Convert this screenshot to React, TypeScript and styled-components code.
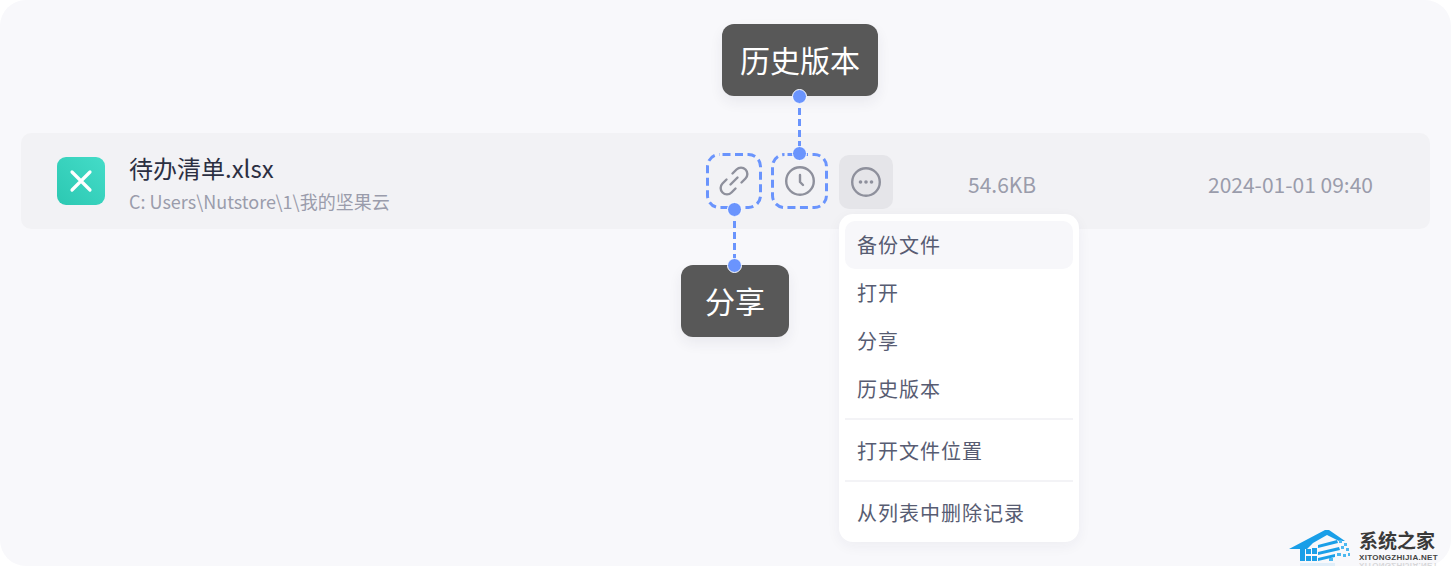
import React from "react"
import styled, { createGlobalStyle } from "styled-components"

const menuGroups = [
  ["备份文件", "打开", "分享", "历史版本"],
  ["打开文件位置"],
  ["从列表中删除记录"],
]

const DashFrame = ({ width }: { width: number }) => (
  <DashSvg width={width} height={56} viewBox={`0 0 ${width} 56`} fill="none">
    <rect x="1.5" y="1.5" width={width - 3} height="53" rx="12" stroke="#6a94fd" strokeWidth="3" strokeDasharray="8 4.5" strokeDashoffset="-3" />
  </DashSvg>
)

const App = () => {
  return (
    <>
      <GlobalStyle />
      <Panel>
        <FileRow>
          <FileIcon>
            <svg width="26" height="26" viewBox="0 0 26 26">
              <path d="M4 4 L22 22 M22 4 L4 22" stroke="#fff" strokeWidth="3.2" strokeLinecap="round" />
            </svg>
          </FileIcon>
          <FileText>
            <FileName>待办清单.xlsx</FileName>
            <FilePath>C: Users\Nutstore\1\我的坚果云</FilePath>
          </FileText>
          <Actions>
            <DashedAction>
              <DashFrame width={56} />
              <svg width="32" height="32" viewBox="0 0 32 32" fill="none" stroke="#8e909c" strokeWidth="2.4" strokeLinecap="round">
                <path d="M14.5 8.5 L18.5 4.5 A6.36 6.36 0 0 1 27.5 13.5 L23.5 17.5" />
                <path d="M8.5 14.5 L4.5 18.5 A6.36 6.36 0 0 0 13.5 27.5 L17.5 23.5" />
                <path d="M12.5 19.5 L19.5 12.5" />
              </svg>
            </DashedAction>
            <DashedAction $wide>
              <DashFrame width={57} />
              <svg width="32" height="32" viewBox="0 0 32 32" fill="none" stroke="#8e909c" strokeWidth="2.4" strokeLinecap="round" strokeLinejoin="round">
                <circle cx="16" cy="16" r="13.8" />
                <path d="M16 10 V17 L19 20" />
              </svg>
            </DashedAction>
            <MoreButton>
              <svg width="32" height="32" viewBox="0 0 32 32" fill="none">
                <circle cx="16" cy="16" r="13.8" stroke="#8e909c" strokeWidth="2.4" />
                <circle cx="10.5" cy="16" r="1.8" fill="#8e909c" />
                <circle cx="16" cy="16" r="1.8" fill="#8e909c" />
                <circle cx="21.5" cy="16" r="1.8" fill="#8e909c" />
              </svg>
            </MoreButton>
          </Actions>
          <SizeText>54.6KB</SizeText>
          <TimeText>2024-01-01 09:40</TimeText>
        </FileRow>

        <Menu>
          {menuGroups.map((group, i) => (
            <MenuGroup key={i}>
              {group.map((label, j) => (
                <MenuItem key={label} $active={i === 0 && j === 0}>
                  {label}
                </MenuItem>
              ))}
            </MenuGroup>
          ))}
        </Menu>

        <HistoryCallout>
          <CalloutBox>历史版本</CalloutBox>
          <Dot $overlap="above" />
          <Connector />
          <Dot />
        </HistoryCallout>

        <ShareCallout>
          <Dot />
          <Connector />
          <Dot $overlap="below" />
          <CalloutBox>分享</CalloutBox>
        </ShareCallout>

        <Watermark>
          <svg width="63" height="42" viewBox="0 0 63 42">
            <path d="M0 21 L36 2 L40 2 L56 13 L50 13 L38 7 L24 15 L18 21 Z" fill="#1a9fe8" />
            <path d="M11 21 H16 V33 H11 Z" fill="#1a9fe8" />
            <path d="M17 21 H22 V26 H17 Z M23 20 H28 V26 H23 Z M17 28 H22 V33 H17 Z M23 28 H28 V33 H23 Z" fill="#1a9fe8" />
            <path d="M29 17 L48 12 L49 15 L29 20 Z M29 24 L50 19 L51 22 L29 27 Z M29 30 L46 26 L46 29 L29 33 Z" fill="#1a9fe8" />
            <path d="M50 12 h3 v3 h-3 Z M55 15 h3 v3 h-3 Z M52 18 h3 v3 h-3 Z M57 20 h3 v3 h-3 Z M48 25 h4 v3 h-4 Z M54 26 h3 v3 h-3 Z M59 25 h2 v3 h-2 Z M40 30 h4 v3 h-4 Z" fill="#4cb8f0" />
            <path d="M11 35 H46 V41 H11 Z" fill="#1a9fe8" opacity=".1" />
          </svg>
          <WatermarkText>
            <WatermarkTitle>系统之家</WatermarkTitle>
            <WatermarkUrl>XITONGZHIJIA.NET</WatermarkUrl>
            <WatermarkReflection>XITONGZHIJIA.NET</WatermarkReflection>
          </WatermarkText>
        </Watermark>
      </Panel>
    </>
  )
}

export default App

const GlobalStyle = createGlobalStyle`
  html, body {
    margin: 0;
    background: #fff;
  }
  body {
    font-family: "Noto Sans CJK SC", "Noto Sans", sans-serif;
  }
`

const Panel = styled.div`
  position: relative;
  box-sizing: border-box;
  width: 1451px;
  height: 566px;
  padding: 133px 21px 0;
  background: #f8f8fb;
  border-radius: 26px;
`

const FileRow = styled.div`
  height: 96px;
  display: flex;
  align-items: center;
  padding-left: 36px;
  background: #f2f2f5;
  border-radius: 10px;
`

const FileIcon = styled.div`
  width: 48px;
  height: 48px;
  flex: none;
  display: flex;
  align-items: center;
  justify-content: center;
  border-radius: 9px;
  background: linear-gradient(45deg, #2cc8b2, #44dcc8);
`

const FileText = styled.div`
  width: 577px;
  flex: none;
  margin-left: 24px;
  padding-top: 3px;
  display: flex;
  flex-direction: column;
`

const FileName = styled.div`
  font-size: 24px;
  line-height: 32px;
  color: #2b2f42;
`

const FilePath = styled.div`
  font-size: 18px;
  line-height: 26px;
  margin-top: 4px;
  color: #9a9cab;
`

const Actions = styled.div`
  flex: none;
  display: flex;
  align-items: center;
  gap: 9px;
`

const DashedAction = styled.div<{ $wide?: boolean }>`
  position: relative;
  width: ${({ $wide }) => ($wide ? "57px" : "56px")};
  height: 56px;
  margin-right: ${({ $wide }) => ($wide ? "2px" : "0")};
  display: flex;
  align-items: center;
  justify-content: center;
`

const DashSvg = styled.svg`
  position: absolute;
  left: 0;
  top: 0;
`

const MoreButton = styled.div`
  width: 54px;
  height: 54px;
  margin-top: 1px;
  display: flex;
  align-items: center;
  justify-content: center;
  border-radius: 10px;
  background: #e5e5e9;
`

const SizeText = styled.div`
  margin: 6px 0 0 75px;
  width: 240px;
  flex: none;
  font-size: 21px;
  line-height: 28px;
  color: #9a9cab;
`

const TimeText = styled.div`
  margin-top: 6px;
  flex: none;
  font-size: 21px;
  line-height: 28px;
  color: #9a9cab;
  white-space: nowrap;
`

const Menu = styled.div`
  position: absolute;
  left: 839px;
  top: 214px;
  box-sizing: border-box;
  width: 240px;
  height: 328px;
  padding: 7px 6px;
  background: #fff;
  border-radius: 14px;
  box-shadow: 0 4px 14px rgba(40, 44, 70, 0.05);
`

const MenuGroup = styled.div`
  padding-bottom: 5px;
  margin-bottom: 7px;
  border-bottom: 2px solid #f3f3f6;
  &:last-child {
    border-bottom: none;
    margin-bottom: 0;
    padding-bottom: 0;
  }
`

const MenuItem = styled.div<{ $active?: boolean }>`
  box-sizing: border-box;
  height: 48px;
  padding: 0 0 1px 12px;
  display: flex;
  align-items: center;
  border-radius: 10px;
  font-size: 20px;
  letter-spacing: 1px;
  color: #575c72;
  background: ${({ $active }) => ($active ? "#f7f7fa" : "transparent")};
`

const CalloutBox = styled.div`
  flex: none;
  box-sizing: border-box;
  width: 100%;
  height: 72px;
  padding-bottom: 2px;
  display: flex;
  align-items: center;
  justify-content: center;
  background: #585858;
  border-radius: 12px;
  font-size: 30px;
  color: #fff;
  box-shadow: 0 6px 14px rgba(40, 44, 70, 0.07);
`

const HistoryCallout = styled.div`
  position: absolute;
  left: 722px;
  top: 24px;
  width: 156px;
  height: 137px;
  display: flex;
  flex-direction: column;
  align-items: center;
`

const ShareCallout = styled.div`
  position: absolute;
  left: 681px;
  top: 202px;
  width: 108px;
  height: 135px;
  display: flex;
  flex-direction: column;
  align-items: center;
`

const Connector = styled.div`
  flex: 1;
  margin: -7px 2px -7px 0;
  width: 3px;
  background: repeating-linear-gradient(to bottom, #6a94fd 0 7px, transparent 7px 11px);
`

const Dot = styled.div<{ $overlap?: "above" | "below" }>`
  position: relative;
  z-index: 1;
  flex: none;
  box-sizing: border-box;
  width: 15px;
  height: 15px;
  margin-right: 2px;
  margin-top: ${({ $overlap }) => ($overlap === "above" ? "-7px" : "0")};
  margin-bottom: ${({ $overlap }) => ($overlap === "below" ? "-8px" : "0")};
  background: #6a94fd;
  border: 1.5px solid #fff;
  border-radius: 50%;
`

const Watermark = styled.div`
  position: absolute;
  left: 1289px;
  top: 528px;
  display: flex;
  gap: 7px;
`

const WatermarkText = styled.div`
  display: flex;
  flex-direction: column;
`

const WatermarkTitle = styled.div`
  font-size: 19px;
  line-height: 24px;
  font-weight: 700;
  color: #3a3a3a;
  white-space: nowrap;
`

const WatermarkUrl = styled.div`
  font-family: "Liberation Sans", sans-serif;
  font-size: 8px;
  line-height: 11px;
  letter-spacing: 0.3px;
  font-weight: 700;
  color: #444;
  white-space: nowrap;
`

const WatermarkReflection = styled(WatermarkUrl)`
  margin-top: -3px;
  transform: scaleY(-1);
  opacity: 0.18;
`
